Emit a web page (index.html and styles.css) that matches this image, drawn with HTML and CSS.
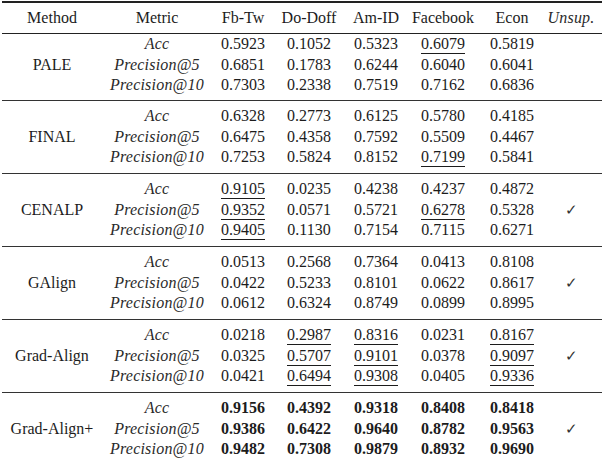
FILE: index.html
```html
<!DOCTYPE html>
<html>
<head>
<meta charset="utf-8">
<link rel="stylesheet" href="styles.css">
</head>
<body>
<div class="table">
  <div class="head">
    <div class="c">Method</div>
    <div class="c">Metric</div>
    <div class="c">Fb-Tw</div>
    <div class="c">Do-Doff</div>
    <div class="c">Am-ID</div>
    <div class="c">Facebook</div>
    <div class="c">Econ</div>
    <div class="c it">Unsup.</div>
  </div>

  <div class="group first">
    <div class="method">PALE</div>
    <div class="c it">Acc</div><div class="c">0.5923</div><div class="c">0.1052</div><div class="c">0.5323</div><div class="c"><span class="u">0.6079</span></div><div class="c">0.5819</div>
    <div class="c it">Precision@5</div><div class="c">0.6851</div><div class="c">0.1783</div><div class="c">0.6244</div><div class="c">0.6040</div><div class="c">0.6041</div>
    <div class="c it">Precision@10</div><div class="c">0.7303</div><div class="c">0.2338</div><div class="c">0.7519</div><div class="c">0.7162</div><div class="c">0.6836</div>
    <div class="unsup"></div>
  </div>

  <div class="group">
    <div class="method">FINAL</div>
    <div class="c it">Acc</div><div class="c">0.6328</div><div class="c">0.2773</div><div class="c">0.6125</div><div class="c">0.5780</div><div class="c">0.4185</div>
    <div class="c it">Precision@5</div><div class="c">0.6475</div><div class="c">0.4358</div><div class="c">0.7592</div><div class="c">0.5509</div><div class="c">0.4467</div>
    <div class="c it">Precision@10</div><div class="c">0.7253</div><div class="c">0.5824</div><div class="c">0.8152</div><div class="c"><span class="u">0.7199</span></div><div class="c">0.5841</div>
    <div class="unsup"></div>
  </div>

  <div class="group">
    <div class="method">CENALP</div>
    <div class="c it">Acc</div><div class="c"><span class="u">0.9105</span></div><div class="c">0.0235</div><div class="c">0.4238</div><div class="c">0.4237</div><div class="c">0.4872</div>
    <div class="c it">Precision@5</div><div class="c"><span class="u">0.9352</span></div><div class="c">0.0571</div><div class="c">0.5721</div><div class="c"><span class="u">0.6278</span></div><div class="c">0.5328</div>
    <div class="c it">Precision@10</div><div class="c"><span class="u">0.9405</span></div><div class="c">0.1130</div><div class="c">0.7154</div><div class="c">0.7115</div><div class="c">0.6271</div>
    <div class="unsup">✓</div>
  </div>

  <div class="group">
    <div class="method">GAlign</div>
    <div class="c it">Acc</div><div class="c">0.0513</div><div class="c">0.2568</div><div class="c">0.7364</div><div class="c">0.0413</div><div class="c">0.8108</div>
    <div class="c it">Precision@5</div><div class="c">0.0422</div><div class="c">0.5233</div><div class="c">0.8101</div><div class="c">0.0622</div><div class="c">0.8617</div>
    <div class="c it">Precision@10</div><div class="c">0.0612</div><div class="c">0.6324</div><div class="c">0.8749</div><div class="c">0.0899</div><div class="c">0.8995</div>
    <div class="unsup">✓</div>
  </div>

  <div class="group">
    <div class="method">Grad-Align</div>
    <div class="c it">Acc</div><div class="c">0.0218</div><div class="c"><span class="u">0.2987</span></div><div class="c"><span class="u">0.8316</span></div><div class="c">0.0231</div><div class="c"><span class="u">0.8167</span></div>
    <div class="c it">Precision@5</div><div class="c">0.0325</div><div class="c"><span class="u">0.5707</span></div><div class="c"><span class="u">0.9101</span></div><div class="c">0.0378</div><div class="c"><span class="u">0.9097</span></div>
    <div class="c it">Precision@10</div><div class="c">0.0421</div><div class="c"><span class="u">0.6494</span></div><div class="c"><span class="u">0.9308</span></div><div class="c">0.0405</div><div class="c"><span class="u">0.9336</span></div>
    <div class="unsup">✓</div>
  </div>

  <div class="group last">
    <div class="method">Grad-Align+</div>
    <div class="c it">Acc</div><div class="c b">0.9156</div><div class="c b">0.4392</div><div class="c b">0.9318</div><div class="c b">0.8408</div><div class="c b">0.8418</div>
    <div class="c it">Precision@5</div><div class="c b">0.9386</div><div class="c b">0.6422</div><div class="c b">0.9640</div><div class="c b">0.8782</div><div class="c b">0.9563</div>
    <div class="c it">Precision@10</div><div class="c b">0.9482</div><div class="c b">0.7308</div><div class="c b">0.9879</div><div class="c b">0.8932</div><div class="c b">0.9690</div>
    <div class="unsup">✓</div>
  </div>
</div>
</body>
</html>
```

FILE: styles.css
```css
html, body {
  margin: 0;
  padding: 0;
  background: #ffffff;
}
body {
  font-family: "Liberation Serif", "DejaVu Serif", serif;
  font-size: 16px;
  color: #1c1c1c;
}
.table {
  width: 600px;
  margin: 1px 0 0 2px;
  border-top: 2px solid #222222;
  border-bottom: 2px solid #222222;
}
.head, .group {
  display: grid;
  grid-template-columns: 100px 110px 62px 70px 64px 70px 68px 50px;
  padding-right: 6px;
}
.head {
  padding-top: 4px;
  padding-bottom: 4px;
  line-height: 22px;
  border-bottom: 1px solid #222222;
}
.group {
  grid-template-rows: repeat(3, 20.5px);
  line-height: 20.5px;
  padding-top: 5px;
  padding-bottom: 5.5px;
  border-bottom: 1px solid #333333;
}
.group.first {
  padding-top: 0;
  padding-bottom: 4.5px;
}
.group.last {
  border-bottom: none;
  padding-bottom: 6px;
}
.c {
  text-align: center;
  white-space: nowrap;
}
.it {
  font-style: italic;
  color: #2a2a2a;
  letter-spacing: 0.2px;
}
.b {
  font-weight: bold;
}
.method {
  grid-column: 1;
  grid-row: 1 / 4;
  align-self: center;
  text-align: center;
  white-space: nowrap;
}
.unsup {
  grid-column: 8;
  grid-row: 1 / 4;
  align-self: center;
  text-align: center;
  font-family: "DejaVu Sans", sans-serif;
  font-size: 15px;
  font-weight: 300;
  color: #333333;
}
.u {
  text-decoration: underline;
  text-decoration-thickness: 1px;
  text-underline-offset: 4px;
}
```
